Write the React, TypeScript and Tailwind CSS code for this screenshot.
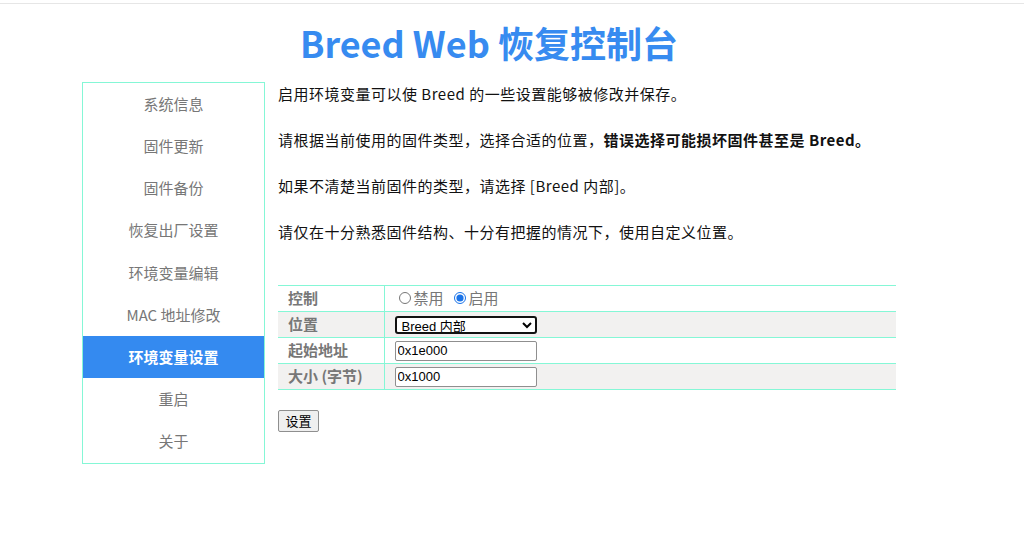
import { useState } from "react";

const menu = [
  "系统信息",
  "固件更新",
  "固件备份",
  "恢复出厂设置",
  "环境变量编辑",
  "MAC 地址修改",
  "环境变量设置",
  "重启",
  "关于",
];

const font = { fontFamily: '"Noto Sans CJK SC", "Noto Sans", sans-serif' };
const ctlFont = { fontFamily: '"Liberation Sans", "Noto Sans CJK SC", sans-serif' };

export default function App() {
  const [enabled, setEnabled] = useState(true);
  const [place, setPlace] = useState("breed");

  return (
    <div className="min-h-[545px] bg-white text-[#111]" style={font}>
      <div className="h-[3px]" />
      <div className="h-px bg-[#e6e6e6]" />
      <div className="ml-[82px] w-[814px]">
        <h1 className="mt-[14px] h-[49px] text-center text-[36px] font-bold leading-[49px] text-[#378bf0]">
          Breed Web 恢复控制台
        </h1>
        <div className="mt-[15px] flex gap-[13px]">
          <ul className="w-[183px] shrink-0 border border-[#85f7d6]">
            {menu.map((m) => (
              <li
                key={m}
                className={
                  m === "环境变量设置"
                    ? "flex h-[42.2px] items-center justify-center bg-[#348af0] text-[15px] font-bold text-white"
                    : "flex h-[42.2px] items-center justify-center text-[15px] text-[#777]"
                }
              >
                {m}
              </li>
            ))}
          </ul>
          <div className="flex-1 pt-[1px] text-[15px]">
            <div className="tracking-[0.5px]">
              <p className="leading-[22px]">启用环境变量可以使 Breed 的一些设置能够被修改并保存。</p>
              <p className="mt-[24px] leading-[22px]">
                请根据当前使用的固件类型，选择合适的位置，
                <b>错误选择可能损坏固件甚至是 Breed。</b>
              </p>
              <p className="mt-[24px] leading-[22px]">如果不清楚当前固件的类型，请选择 [Breed 内部]。</p>
              <p className="mt-[24px] leading-[22px]">请仅在十分熟悉固件结构、十分有把握的情况下，使用自定义位置。</p>
            </div>

            <table className="mt-[42px] w-full border-collapse text-[15px]">
              <tbody>
                <tr className="h-[26px] border-y border-[#85f7d6]">
                  <td className="w-[106px] border-r border-[#85f7d6] pl-[10px] font-bold text-[#777]">控制</td>
                  <td className="pl-[14px] text-[#777]">
                    <label className="inline-flex items-center">
                      <input
                        type="radio"
                        name="ctl"
                        checked={!enabled}
                        onChange={() => setEnabled(false)}
                        className="m-0 mr-[3px] h-[12px] w-[12px]"
                      />
                      禁用
                    </label>
                    <label className="ml-[10px] inline-flex items-center">
                      <input
                        type="radio"
                        name="ctl"
                        checked={enabled}
                        onChange={() => setEnabled(true)}
                        className="m-0 mr-[3px] h-[12px] w-[12px] accent-[#1a73e8]"
                      />
                      启用
                    </label>
                  </td>
                </tr>
                <tr className="h-[26px] border-y border-[#85f7d6] bg-[#f2f1f0]">
                  <td className="border-r border-[#85f7d6] pl-[10px] font-bold text-[#777]">位置</td>
                  <td className="pl-[10px]">
                    <select
                      value={place}
                      onChange={(e) => setPlace(e.target.value)}
                      style={ctlFont}
                      className="block h-[18px] w-[142px] rounded-[3px] border-2 border-[#111] bg-white py-0 pl-[1px] text-[13px] leading-[14px] text-black"
                    >
                      <option value="breed">Breed 内部</option>
                      <option value="custom">自定义</option>
                    </select>
                  </td>
                </tr>
                <tr className="h-[26px] border-y border-[#85f7d6]">
                  <td className="border-r border-[#85f7d6] pl-[10px] font-bold text-[#777]">起始地址</td>
                  <td className="pl-[10px]">
                    <input
                      defaultValue="0x1e000"
                      style={ctlFont}
                      className="block h-[20px] w-[142px] rounded-[2px] border border-[#8f8f8f] px-[2px] text-[13px] text-black"
                    />
                  </td>
                </tr>
                <tr className="h-[26px] border-y border-[#85f7d6] bg-[#f2f1f0]">
                  <td className="border-r border-[#85f7d6] pl-[10px] font-bold text-[#777]">大小 (字节)</td>
                  <td className="pl-[10px]">
                    <input
                      defaultValue="0x1000"
                      style={ctlFont}
                      className="block h-[20px] w-[142px] rounded-[2px] border border-[#8f8f8f] bg-white px-[2px] text-[13px] text-black"
                    />
                  </td>
                </tr>
              </tbody>
            </table>

            <button className="mt-[20px] h-[22px] w-[41px] rounded-[2px] border border-[#8f8f8f] bg-[#efefef] text-[13px] text-black">
              设置
            </button>
          </div>
        </div>
      </div>
    </div>
  );
}
